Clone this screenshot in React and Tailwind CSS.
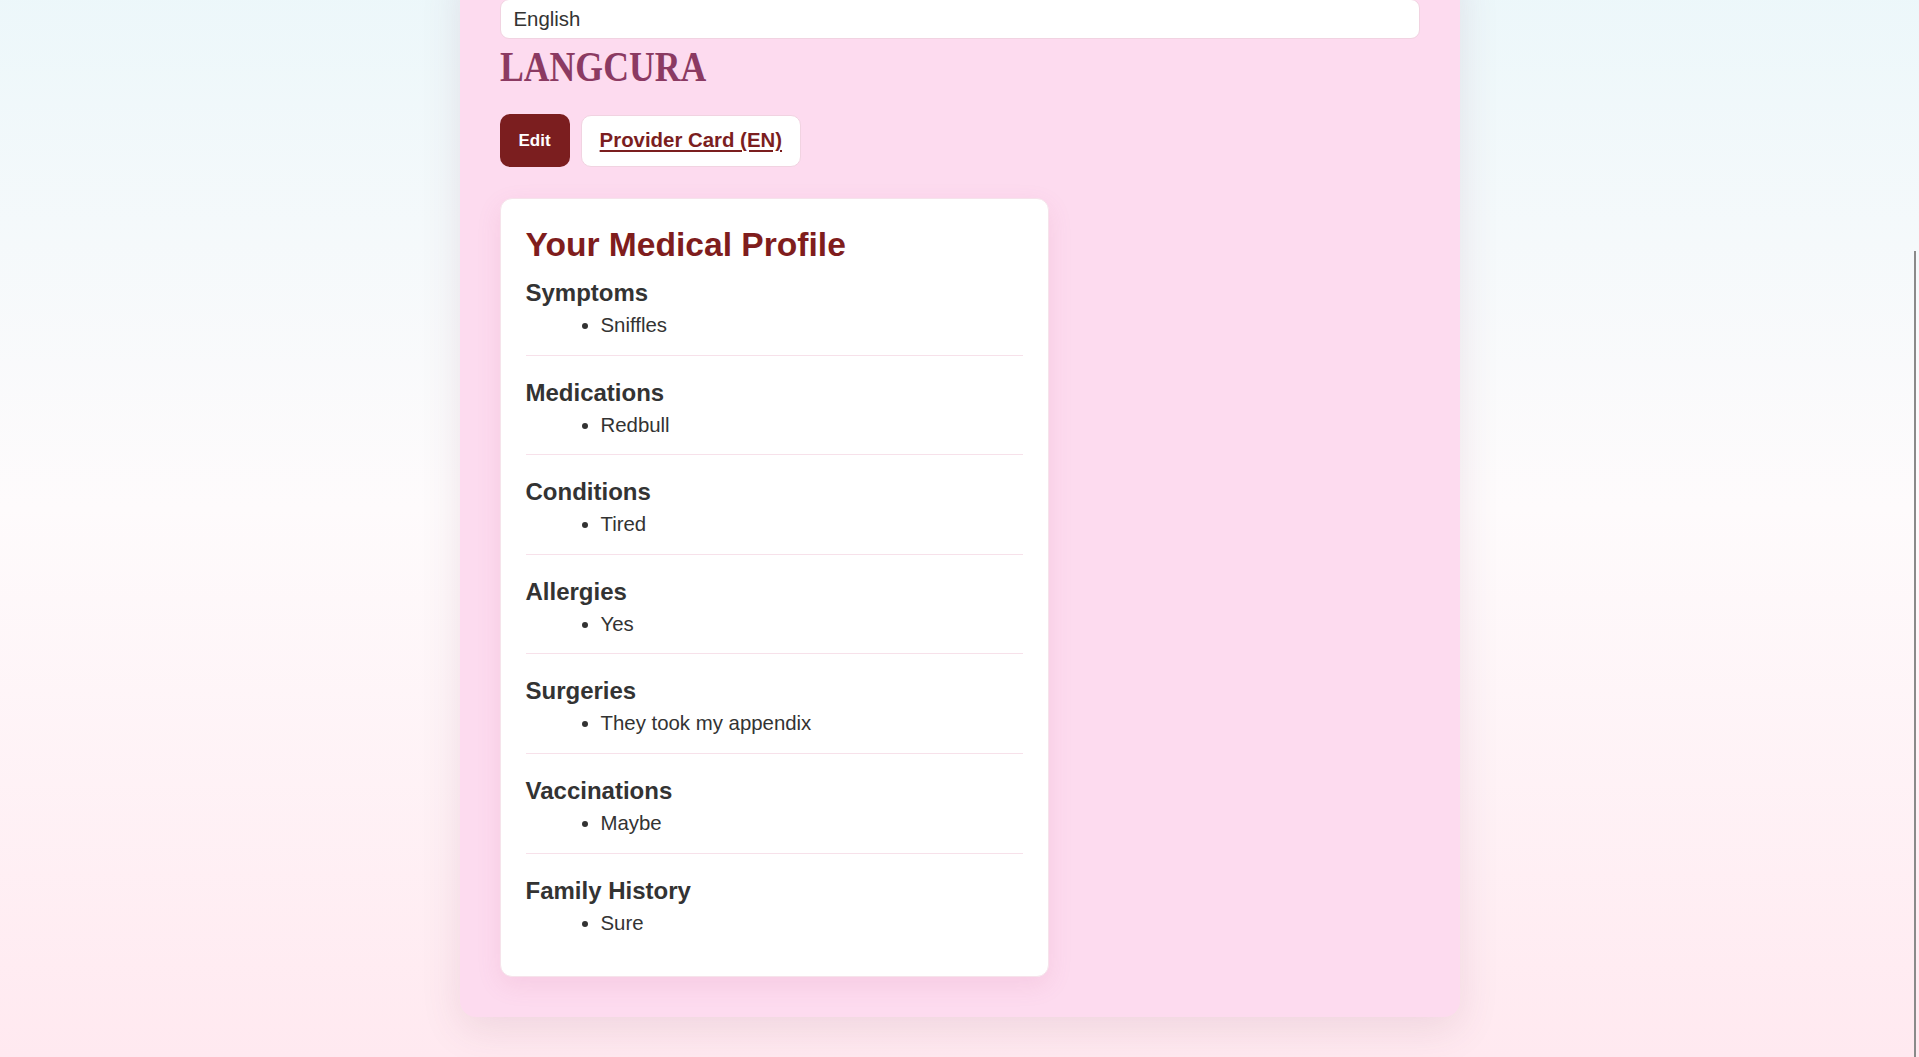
import React from "react";

const profile = [
  { title: "Symptoms", items: ["Sniffles"] },
  { title: "Medications", items: ["Redbull"] },
  { title: "Conditions", items: ["Tired"] },
  { title: "Allergies", items: ["Yes"] },
  { title: "Surgeries", items: ["They took my appendix"] },
  { title: "Vaccinations", items: ["Maybe"] },
  { title: "Family History", items: ["Sure"] },
];

const ProfileSection = ({ title, items }) => (
  <section className="pt-[22px] first:pt-[13px] pb-[14px] border-b border-[#f7e1ea] last:border-b-0">
    <h3 className="text-[24px] leading-[29px] font-bold text-[#333333]">{title}</h3>
    <ul className="mt-[3px] list-disc pl-[75px] text-[20.4px] leading-[30.6px] text-[#333333]">
      {items.map((item) => (
        <li key={item}>{item}</li>
      ))}
    </ul>
  </section>
);

export default function App() {
  return (
    <div
      className="min-h-screen bg-gradient-to-b from-[#ebf7fa] via-[#fefbfc] to-[#ffe9f0] pb-10"
      style={{ fontFamily: '"Liberation Sans", Arial, sans-serif' }}
    >
      {/* Main panel */}
      <div className="w-[1000px] mx-auto -mt-[41px] bg-[#fddbef] rounded-2xl shadow-[0_12px_40px_rgba(120,60,90,0.12)] px-10 pt-10 pb-10">
        <select className="block w-full h-[40px] appearance-none bg-white border border-[#f1d3e1] rounded-[9px] pl-[13px] text-[20.4px] text-[#333333] outline-none">
          <option>English</option>
        </select>

        <h1
          className="mt-[3px] inline-block origin-left scale-x-[0.85] text-[42px] leading-[50px] font-bold text-[#8b3a62]"
          style={{ fontFamily: '"Liberation Serif", "Times New Roman", serif' }}
        >
          LANGCURA
        </h1>

        {/* Actions */}
        <div className="mt-[22px] flex items-center gap-[11px]">
          <button className="h-[53px] px-[19px] rounded-[10px] bg-[#7b1e1f] text-white text-[17px] font-bold">
            Edit
          </button>
          <button className="h-[52px] px-[18px] rounded-[10px] bg-white border border-[#f1d3e1] text-[#7b1e1f] text-[20.4px] font-bold underline underline-offset-[3px]">
            Provider Card (EN)
          </button>
        </div>

        {/* Profile card */}
        <div className="mt-[31px] w-[549px] bg-white rounded-xl border border-[#f6e3eb] shadow-[0_8px_24px_rgba(200,90,140,0.12)] px-[25px] pt-[26px] pb-[24px]">
          <h2 className="text-[33.6px] leading-[40px] font-bold text-[#7f1d1d]">Your Medical Profile</h2>
          <div>
            {profile.map((s) => (
              <ProfileSection key={s.title} title={s.title} items={s.items} />
            ))}
          </div>
        </div>
      </div>

      {/* scrollbar thumb */}
      <div className="fixed right-[3px] top-[251px] bottom-0 w-[2px] bg-[#8a8a8a]" />
    </div>
  );
}
